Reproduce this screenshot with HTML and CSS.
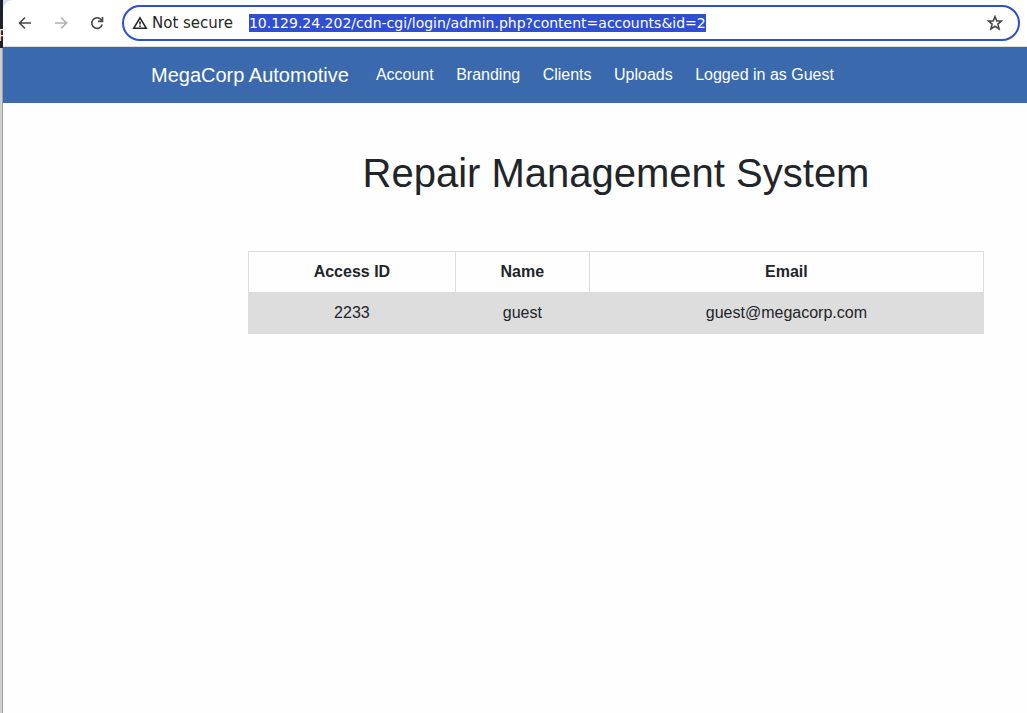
FILE: index.html
```html
<!DOCTYPE html>
<html lang="en">
<head>
<meta charset="utf-8">
<title>Repair Management System</title>
<link rel="stylesheet" href="styles.css">
</head>
<body>
<div class="desktop">
  <div class="backdrop" aria-hidden="true"><div class="backdrop-dark">F</div></div>
  <div class="window">
    <div class="toolbar-frame">
      <div class="toolbar">
        <button class="tool" type="button" aria-label="Back">
          <svg viewBox="0 0 16 16" width="16" height="16"><path d="M14 8H3M8 2.500L2.500 8L8 13.500"/></svg>
        </button>
        <button class="tool" type="button" aria-label="Forward" disabled>
          <svg viewBox="0 0 16 16" width="16" height="16"><path d="M2 8H13M8 2.500L13.500 8L8 13.500"/></svg>
        </button>
        <button class="tool" type="button" aria-label="Reload">
          <svg viewBox="0 0 16 16" width="16" height="16"><path d="M13.200 9.500A5.300 5.300 0 1 1 12.200 4.700L13.400 6M13.500 2V6.400H9"/></svg>
        </button>
        <div class="address">
          <svg class="warning" viewBox="0 0 16 16" width="16" height="16"><path d="M8 2.800L14.200 13.200H1.800Z"/><path d="M8 6.500V9.600M8 10.600V12"/></svg>
          <label class="security" for="url">Not secure</label>
          <input class="url" id="url" type="text" spellcheck="false" value="10.129.24.202/cdn-cgi/login/admin.php?content=accounts&amp;id=2">
          <button class="star" type="button" aria-label="Bookmark this page">
            <svg viewBox="0 0 18 18" width="18" height="18"><path d="M9 2.600L10.800 7H15.400L11.900 10.100L13.100 14.900L9 12.300L4.900 14.900L6.100 10.100L2.600 7H7.200Z"/></svg>
          </button>
        </div>
      </div>
    </div>
    <nav class="navbar">
      <a class="brand" href="#">MegaCorp Automotive</a>
      <div class="nav-links">
        <a class="nav-link" href="#">Account</a>
        <a class="nav-link" href="#">Branding</a>
        <a class="nav-link" href="#">Clients</a>
        <a class="nav-link" href="#">Uploads</a>
        <a class="nav-link" href="#">Logged in as Guest</a>
      </div>
    </nav>
    <main class="content">
      <h1 class="title">Repair Management System</h1>
      <table class="accounts">
        <thead><tr><th scope="col">Access ID</th><th scope="col">Name</th><th scope="col">Email</th></tr></thead>
        <tbody><tr><td>2233</td><td>guest</td><td>guest@megacorp.com</td></tr></tbody>
      </table>
    </main>
  </div>
</div>
<script src="script.js"></script>
</body>
</html>
```
FILE: styles.css
```css
* { box-sizing: border-box; }

body {
  margin: 0;
  background: #fefefe;
  color: #212529;
  font: 16px/24px "Liberation Sans", Arial, sans-serif;
}

.desktop {
  display: flex;
  min-height: 100vh;
}

.backdrop {
  width: 3px;
  flex: none;
  overflow: hidden;
  background: linear-gradient(90deg, #cfcfcf 67%, #a0a0a0 67%);
}

.backdrop-dark {
  height: 48px;
  padding-top: 24px;
  background: #1e202b;
  color: #ececec;
  text-indent: -2px;
}

.window {
  flex: 1;
  min-width: 0;
}

.toolbar-frame { background: #d3e0fb; }

.toolbar {
  display: flex;
  align-items: center;
  height: 47px;
  padding: 0 7px 0 4px;
  border-bottom: 1px solid #dcdcdc;
  border-top-left-radius: 10px;
  background: #fff;
}

.tool,
.star {
  display: flex;
  align-items: center;
  justify-content: center;
  flex: none;
  width: 36px;
  height: 36px;
  padding: 0;
  border: 0;
  background: none;
  color: #474747;
}

.tool:disabled { color: #b0b0b0; }

svg {
  fill: none;
  stroke: currentColor;
  stroke-width: 1.6;
}

.address {
  display: flex;
  align-items: center;
  flex: 1;
  min-width: 0;
  height: 36px;
  margin-left: 7px;
  padding: 0 5px 0 8px;
  border: 2px solid #2f4fd0;
  border-radius: 18px;
  font-family: "DejaVu Sans", sans-serif;
  color: #252525;
}

.warning { flex: none; }

.security {
  flex: none;
  margin: 0 16px 0 4px;
  font-size: 15px;
}

.url {
  flex: 1;
  min-width: 0;
  padding: 0;
  border: 0;
  outline: 0;
  background: none;
  color: #252525;
  caret-color: transparent;
  font: 14px/18px "DejaVu Sans", sans-serif;
}

.url::selection {
  background: #2f4fd0;
  color: #fff;
}

.navbar {
  display: flex;
  align-items: center;
  flex-wrap: wrap;
  gap: 0 18px;
  min-height: 56px;
  padding: 8px 16px 8px 148px;
  background: #3a6aad;
}

.brand,
.nav-link {
  color: #fff;
  text-decoration: none;
}

.brand { font-size: 20px; }

.nav-link { padding: 8px 9px; }

.content { padding: 46px 43px 48px 245px; }

.title {
  margin: 0 0 54px;
  font-size: 40px;
  font-weight: 400;
  line-height: 48px;
  text-align: center;
}

.accounts {
  width: 100%;
  border-collapse: collapse;
  text-align: center;
}

.accounts th,
.accounts td {
  padding: 8px;
  border: 1px solid #ddd;
}

.accounts tbody tr { background: #ddd; }
```
FILE: script.js
```js
const url = document.getElementById("url");
url.focus();
url.select();
```
